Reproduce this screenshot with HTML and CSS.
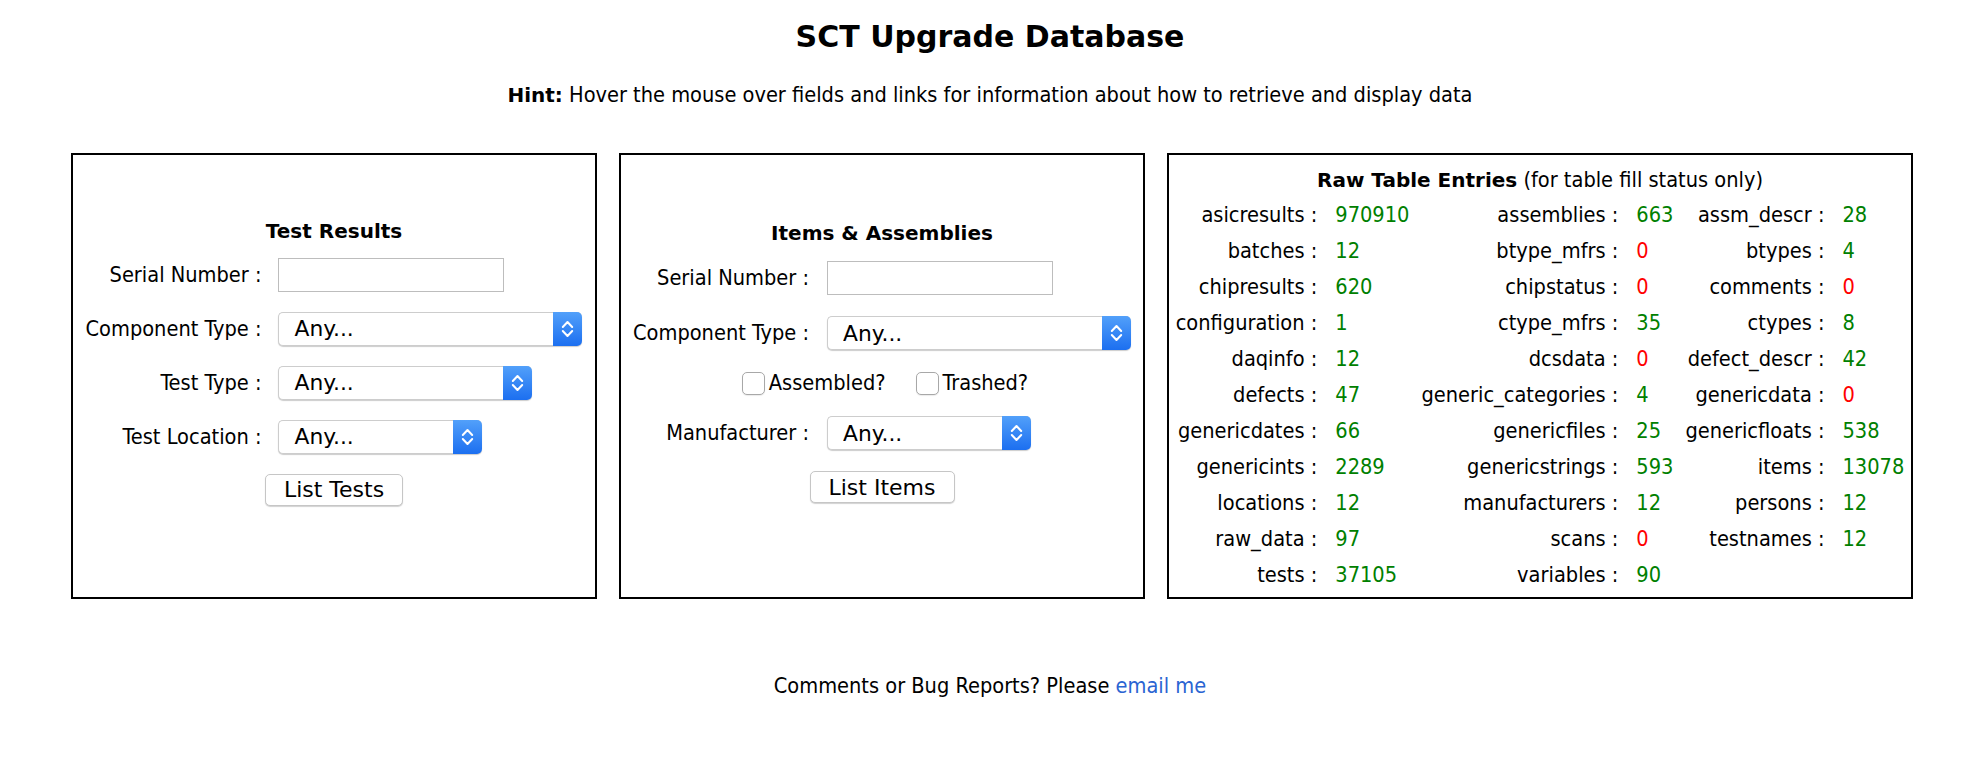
FILE: index.html
```html
<!DOCTYPE html>
<html>
<head>
<meta charset="utf-8">
<title>SCT Upgrade Database</title>
<link rel="stylesheet" href="styles.css">
</head>
<body>
<h1 class="title">SCT Upgrade Database</h1>
<p class="hint"><b>Hint:</b> Hover the mouse over fields and links for information about how to retrieve and display data</p>

<div class="panels">
  <section class="panel panel-form">
    <div class="form">
      <h3 class="ptitle">Test Results</h3>
      <label class="lbl">Serial Number :</label>
      <div class="cell"><input class="txt" type="text"></div>
      <label class="lbl">Component Type :</label>
      <div class="cell"><div class="sel w-wide"><select><option>Any...</option></select><span class="arr"><svg width="13" height="20" viewBox="0 0 13 20"><polyline points="1.8,8 6.5,3 11.2,8"/><polyline points="1.8,12 6.5,17 11.2,12"/></svg></span></div></div>
      <label class="lbl">Test Type :</label>
      <div class="cell"><div class="sel w-mid"><select><option>Any...</option></select><span class="arr"><svg width="13" height="20" viewBox="0 0 13 20"><polyline points="1.8,8 6.5,3 11.2,8"/><polyline points="1.8,12 6.5,17 11.2,12"/></svg></span></div></div>
      <label class="lbl">Test Location :</label>
      <div class="cell"><div class="sel w-narrow"><select><option>Any...</option></select><span class="arr"><svg width="13" height="20" viewBox="0 0 13 20"><polyline points="1.8,8 6.5,3 11.2,8"/><polyline points="1.8,12 6.5,17 11.2,12"/></svg></span></div></div>
      <div class="btn-row"><button class="btn">List Tests</button></div>
    </div>
  </section>

  <section class="panel panel-form">
    <div class="form form-items">
      <h3 class="ptitle">Items &amp; Assemblies</h3>
      <label class="lbl">Serial Number :</label>
      <div class="cell"><input class="txt" type="text"></div>
      <label class="lbl">Component Type :</label>
      <div class="cell"><div class="sel w-wide"><select><option>Any...</option></select><span class="arr"><svg width="13" height="20" viewBox="0 0 13 20"><polyline points="1.8,8 6.5,3 11.2,8"/><polyline points="1.8,12 6.5,17 11.2,12"/></svg></span></div></div>
      <div class="checks">
        <label class="chk"><input type="checkbox">Assembled?</label>
        <label class="chk"><input type="checkbox">Trashed?</label>
      </div>
      <label class="lbl">Manufacturer :</label>
      <div class="cell"><div class="sel w-narrow"><select><option>Any...</option></select><span class="arr"><svg width="13" height="20" viewBox="0 0 13 20"><polyline points="1.8,8 6.5,3 11.2,8"/><polyline points="1.8,12 6.5,17 11.2,12"/></svg></span></div></div>
      <div class="btn-row"><button class="btn">List Items</button></div>
    </div>
  </section>

  <section class="panel panel-raw">
    <h3 class="rtitle"><b>Raw Table Entries</b> (for table fill status only)</h3>
    <div class="raw">
      <span class="k">asicresults :</span><span class="v ok">970910</span>
      <span class="k">assemblies :</span><span class="v ok">663</span>
      <span class="k">assm_descr :</span><span class="v ok">28</span>

      <span class="k">batches :</span><span class="v ok">12</span>
      <span class="k">btype_mfrs :</span><span class="v bad">0</span>
      <span class="k">btypes :</span><span class="v ok">4</span>

      <span class="k">chipresults :</span><span class="v ok">620</span>
      <span class="k">chipstatus :</span><span class="v bad">0</span>
      <span class="k">comments :</span><span class="v bad">0</span>

      <span class="k">configuration :</span><span class="v ok">1</span>
      <span class="k">ctype_mfrs :</span><span class="v ok">35</span>
      <span class="k">ctypes :</span><span class="v ok">8</span>

      <span class="k">daqinfo :</span><span class="v ok">12</span>
      <span class="k">dcsdata :</span><span class="v bad">0</span>
      <span class="k">defect_descr :</span><span class="v ok">42</span>

      <span class="k">defects :</span><span class="v ok">47</span>
      <span class="k">generic_categories :</span><span class="v ok">4</span>
      <span class="k">genericdata :</span><span class="v bad">0</span>

      <span class="k">genericdates :</span><span class="v ok">66</span>
      <span class="k">genericfiles :</span><span class="v ok">25</span>
      <span class="k">genericfloats :</span><span class="v ok">538</span>

      <span class="k">genericints :</span><span class="v ok">2289</span>
      <span class="k">genericstrings :</span><span class="v ok">593</span>
      <span class="k">items :</span><span class="v ok">13078</span>

      <span class="k">locations :</span><span class="v ok">12</span>
      <span class="k">manufacturers :</span><span class="v ok">12</span>
      <span class="k">persons :</span><span class="v ok">12</span>

      <span class="k">raw_data :</span><span class="v ok">97</span>
      <span class="k">scans :</span><span class="v bad">0</span>
      <span class="k">testnames :</span><span class="v ok">12</span>

      <span class="k">tests :</span><span class="v ok">37105</span>
      <span class="k">variables :</span><span class="v ok">90</span>
      <span class="k"></span><span class="v"></span>
    </div>
  </section>
</div>

<p class="footer">Comments or Bug Reports? Please <a href="#">email me</a></p>
</body>
</html>
```

FILE: styles.css
```css
body {
  margin: 0;
  background: #fff;
  color: #000;
  font-family: "DejaVu Sans Condensed", "DejaVu Sans", sans-serif;
  font-size: 21.6px;
}

b,
.title,
.ptitle {
  font-family: "DejaVu Sans", sans-serif;
  font-weight: bold;
}

b {
  font-size: 20px;
}

.title {
  margin: 19px 0 0;
  font-size: 30px;
  line-height: 36px;
  text-align: center;
}

.hint {
  margin: 28px 0 0;
  line-height: 24px;
  text-align: center;
}

.panels {
  display: flex;
  gap: 22px;
  margin-top: 46px;
  padding-left: 71px;
}

.panel {
  box-sizing: border-box;
  border: 2px solid #000;
}

.panel-form {
  width: 526px;
  display: flex;
  align-items: center;
  justify-content: center;
  padding-bottom: 28px;
}

.panel-raw {
  width: 746px;
  padding: 13px 0 4px;
}

/* forms */
.form {
  display: grid;
  grid-template-columns: auto auto;
  column-gap: 17px;
  row-gap: 20px;
  align-items: center;
}

.form-items {
  column-gap: 18px;
  row-gap: 21px;
}

.ptitle {
  grid-column: 1 / -1;
  margin: 0 0 -5px;
  font-size: 20px;
  line-height: 24px;
  text-align: center;
}

.lbl {
  text-align: right;
  white-space: nowrap;
  line-height: 24px;
}

.cell {
  display: flex;
}

.txt {
  box-sizing: border-box;
  width: 226px;
  height: 34px;
  margin: 0;
  padding: 0 5px;
  border: 1px solid #bdbdbd;
  border-radius: 0;
  background: #fff;
  font: 21px "DejaVu Sans", sans-serif;
}

.sel {
  box-sizing: border-box;
  display: flex;
  height: 34px;
  border: 1px solid #cdcdcd;
  border-right: none;
  border-radius: 5px;
  background: #fff;
  box-shadow: 0 1px 1px rgba(0, 0, 0, 0.2);
}

.w-wide { width: 304px; }
.w-mid { width: 254px; }
.w-narrow { width: 204px; }

.sel select {
  -webkit-appearance: none;
  appearance: none;
  flex: 1;
  min-width: 0;
  margin: 0;
  padding: 0 0 0 15px;
  border: 0;
  background: transparent;
  color: #000;
  font: 21.8px "DejaVu Sans", sans-serif;
  outline: none;
}

.arr {
  width: 29px;
  margin: -1px 0;
  border-radius: 0 5px 5px 0;
  background: linear-gradient(#52a0fa, #1c6ff0);
  display: flex;
  align-items: center;
  justify-content: center;
}

.arr svg polyline {
  fill: none;
  stroke: #fff;
  stroke-width: 2;
  stroke-linecap: round;
  stroke-linejoin: round;
}

.checks {
  grid-column: 1 / -1;
  display: flex;
  justify-content: center;
  gap: 30px;
  height: 24px;
  line-height: 24px;
  padding-left: 6px;
}

.chk {
  display: flex;
  align-items: center;
  gap: 4px;
}

.chk input {
  -webkit-appearance: none;
  appearance: none;
  box-sizing: border-box;
  width: 23px;
  height: 23px;
  margin: 0;
  border: 1px solid #a8a8a8;
  border-radius: 5px;
  background: #fff;
  box-shadow: 0 1px 1px rgba(0, 0, 0, 0.08);
}

.btn-row {
  grid-column: 1 / -1;
  display: flex;
  justify-content: center;
}

.btn {
  box-sizing: border-box;
  height: 32px;
  margin: 0;
  padding: 0 18px;
  border: 1px solid #c6c6c6;
  border-radius: 5px;
  background: #fff;
  box-shadow: 0 1px 1px rgba(0, 0, 0, 0.18);
  color: #000;
  font: 22px "DejaVu Sans", sans-serif;
}

/* raw table */
.rtitle {
  margin: 0 0 5px;
  font-size: 21.6px;
  line-height: 24px;
  font-weight: normal;
  text-align: center;
}

.raw {
  display: grid;
  grid-template-columns: repeat(6, auto);
  justify-content: center;
  line-height: 36px;
}

.k {
  text-align: right;
  white-space: nowrap;
  padding-right: 18px;
}

.v {
  padding-right: 12px;
}

.v:nth-child(6n) {
  padding-right: 0;
}

.ok { color: #008000; }
.bad { color: #ff0000; }

.footer {
  margin: 75px 0 0;
  line-height: 24px;
  text-align: center;
}

.footer a {
  color: #2a64d2;
  text-decoration: none;
}
```
